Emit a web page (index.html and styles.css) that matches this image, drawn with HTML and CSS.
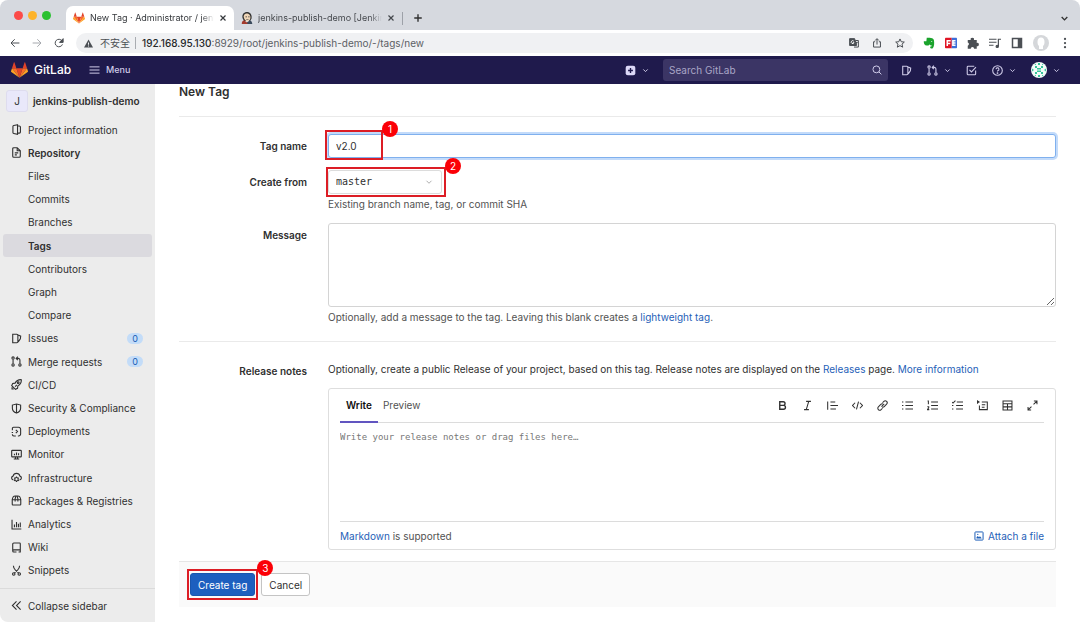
FILE: index.html
```
<!DOCTYPE html>
<html lang="en">
<head>
    <meta charset="UTF-8">
    <meta name="viewport" content="width=device-width, initial-scale=1.0">
    <title>New Tag · Administrator / jenkins-publish-demo</title>
    <link rel="stylesheet" href="styles.css">
</head>
<body>
    <!-- icon set -->
    <svg class="icon-defs" aria-hidden="true">
        <symbol id="i-tanuki" viewBox="0 0 24 22">
            <path fill="#e24329" d="M12 22 7.6 8.5h8.8z"/>
            <path fill="#fc6d26" d="M12 22 1.4 8.5h6.2zM12 22 22.6 8.5h-6.2z"/>
            <path fill="#fca326" d="M1.4 8.5 0 12.6c-.1.4 0 .8.4 1.1L12 22zM22.6 8.5l1.4 4.1c.1.4 0 .8-.4 1.1L12 22z"/>
            <path fill="#e24329" d="M1.4 8.5h6.2L4.9.4c-.1-.5-.7-.5-.9 0zM22.6 8.5h-6.2L19.1.4c.1-.5.7-.5.9 0z"/>
        </symbol>
        <symbol id="i-chevron" viewBox="0 0 16 16"><path d="m3 5.500 5 5 5-5"/></symbol>
        <symbol id="i-close" viewBox="0 0 16 16"><path d="m3 3 10 10M13 3 3 13"/></symbol>
        <symbol id="i-plus" viewBox="0 0 16 16"><path d="M8 2v12M2 8h12"/></symbol>
        <symbol id="i-back" viewBox="0 0 16 16"><path d="M15 8H2M7.500 2 1.600 8l5.900 6"/></symbol>
        <symbol id="i-forward" viewBox="0 0 16 16"><path d="M1 8h13M8.500 2l5.900 6-5.900 6"/></symbol>
        <symbol id="i-reload" viewBox="0 0 16 16"><path d="M13.500 10.200a6 6 0 1 1-.7-5.600"/><path class="solid" d="M14.600 1v6H8.800z"/></symbol>
        <symbol id="i-issues" viewBox="0 0 16 16"><path d="M2.500 1.800h6a1.500 1.500 0 0 1 1.500 1.500v9.400a1.500 1.500 0 0 1-1.500 1.500h-6zM10.500 3l3.600 1.600-.5 4-3.100 4.200"/></symbol>
        <symbol id="i-merge" viewBox="0 0 16 16"><circle cx="3" cy="3" r="1.700"/><circle cx="3" cy="13" r="1.700"/><circle cx="13" cy="13" r="1.700"/><path d="M3 5v6M13 11V6a2.500 2.500 0 0 0-2.500-2.500H8M10 1 7.500 3.500 10 6"/></symbol>
        <symbol id="i-todo" viewBox="0 0 16 16"><path d="M14 8v5a1.200 1.200 0 0 1-1.200 1.200H3A1.200 1.200 0 0 1 1.800 13V3A1.200 1.200 0 0 1 3 1.800h9M5 7l3 3 6.500-7"/></symbol>
        <symbol id="i-help" viewBox="0 0 16 16"><circle cx="8" cy="8" r="7"/><path d="M5.900 6.200a2.100 2.100 0 1 1 3 1.900c-.6.300-.9.700-.9 1.400"/><circle class="solid" cx="8" cy="11.800" r=".5"/></symbol>
        <symbol id="i-search" viewBox="0 0 16 16"><circle cx="7" cy="7" r="5.500"/><path d="m11 11 4 4"/></symbol>
        <symbol id="i-project" viewBox="0 0 16 16"><path d="M9.500 1 4 2.200A1.500 1.500 0 0 0 2.800 3.700v8.600A1.500 1.500 0 0 0 4 13.800L9.500 15zM9.500 2.800h2.700a1.500 1.500 0 0 1 1.500 1.500v7.400a1.500 1.500 0 0 1-1.500 1.500H9.500"/></symbol>
        <symbol id="i-doc" viewBox="0 0 16 16"><path d="M9 1H4a1.500 1.500 0 0 0-1.500 1.500v11A1.500 1.500 0 0 0 4 15h8a1.500 1.500 0 0 0 1.500-1.500v-8zM9 1v4.500h4.500M5.500 8.500h5M5.500 11.500h3"/></symbol>
        <symbol id="i-rocket" viewBox="0 0 16 16"><path d="M15 1c-4-.3-7 1.300-9 5L2.500 6.500 1 9.500l5.500 5.500 3-1.500L10 10c3.700-2 5.300-5 5-9zM6 11l2.500-2.500M1.500 12v2.500H4"/><circle cx="10.500" cy="5.500" r="1.300"/></symbol>
        <symbol id="i-shield" viewBox="0 0 16 16"><path d="M8 1.500 14 3v4.500c0 3.200-2.300 5.700-6 7.200-3.700-1.500-6-4-6-7.200V3zM8 1.500v13"/></symbol>
        <symbol id="i-deploy" viewBox="0 0 16 16"><path d="M2 6V3.500A1.700 1.700 0 0 1 3.700 1.800H11a3 3 0 0 1 3 3v6.700a3 3 0 0 1-3 3h-1M1 9.500h2M2 12v.5a2 2 0 0 0 2 2h3M7 5.500 9.500 8 7 10.500"/></symbol>
        <symbol id="i-monitor" viewBox="0 0 16 16"><path d="M2 2h12a1 1 0 0 1 1 1v7.500a1 1 0 0 1-1 1H2a1 1 0 0 1-1-1V3a1 1 0 0 1 1-1zM4 14.500h8M6.500 12v2M9.500 12v2M5 7v2M8 5v4M11 6v3"/></symbol>
        <symbol id="i-cloud" viewBox="0 0 16 16"><path d="M3.500 11.500A2.800 2.800 0 0 1 3 6c.7-2.500 2.500-4 5-4s4.300 1.500 5 4a2.800 2.800 0 0 1-.5 5.500"/><circle cx="8" cy="10.500" r="2.500"/><path d="M8 6.500V8M8 13v1.700M4.500 8.500l1.300.8M11.500 8.500l-1.300.8M4.500 12.700l1.300-.8M11.500 12.700l-1.300-.8"/></symbol>
        <symbol id="i-package" viewBox="0 0 16 16"><path d="M1.800 7h12.400v6.500a1 1 0 0 1-1 1H2.800a1 1 0 0 1-1-1zM1.800 7c.5-3.500 2-5.500 4.200-5.500h4c2.200 0 3.700 2 4.200 5.500M6 9.500V5.500L7 2M10 9.500V5.500L9 2"/></symbol>
        <symbol id="i-chart" viewBox="0 0 16 16"><path d="M1.500 1v13.500H15M5 8v4M8 4.500V12M10.800 7v5M13.500 5v7"/></symbol>
        <symbol id="i-book" viewBox="0 0 16 16"><path d="M13.500 11.500V2.500a1 1 0 0 0-1-1H4A1.500 1.500 0 0 0 2.500 3v10A1.500 1.500 0 0 0 4 14.500h4M2.800 12a2 2 0 0 1 1.200-.5h9.500v3H11"/></symbol>
        <symbol id="i-scissors" viewBox="0 0 16 16"><circle cx="4" cy="13" r="1.800"/><circle cx="12" cy="13" r="1.800"/><path d="M3.500 1c0 3 1 4.500 3 6.500l4.500 4M12.500 1c0 3-1 4.500-3 6.500l-4.500 4"/></symbol>
        <symbol id="i-collapse" viewBox="0 0 16 16"><path d="M8 2 2 8l6 6M14 2 8 8l6 6"/></symbol>
        <symbol id="i-bold" viewBox="0 0 16 16"><path d="M4 2.500h5a2.700 2.700 0 0 1 0 5.400H4zM4 7.900h5.500a2.800 2.800 0 0 1 0 5.600H4z"/></symbol>
        <symbol id="i-italic" viewBox="0 0 16 16"><path d="M6 2h7M3 14h7M9.800 2 6.200 14"/></symbol>
        <symbol id="i-quote" viewBox="0 0 16 16"><path d="M1 2v12M5 3h7M5 8h11M5 13h8"/></symbol>
        <symbol id="i-code" viewBox="0 0 16 16"><path d="M4.500 4 .8 8l3.700 4M11.500 4l3.700 4-3.700 4M9.500 2.500l-3 11"/></symbol>
        <symbol id="i-link" viewBox="0 0 16 16"><path d="m6.500 9.500 4-4M8 4l2-2a2.800 2.800 0 0 1 4 4l-3.500 3.500a2.800 2.800 0 0 1-3 .7M8 12l-2 2a2.800 2.800 0 0 1-4-4l3.500-3.500a2.800 2.800 0 0 1 3-.7"/></symbol>
        <symbol id="i-list" viewBox="0 0 16 16"><path d="M0 3h2M0 8h2M0 13h2M5 3h11M5 8h11M5 13h11"/></symbol>
        <symbol id="i-numlist" viewBox="0 0 16 16"><path d="M6 3h10M6 8h10M6 13h10M.8 1.500H2V6M.5 9.800h2v1.700l-2 2.500h2.800"/></symbol>
        <symbol id="i-checklist" viewBox="0 0 16 16"><path d="M7 3h9M6 8h10M6 13h10M0 3l1.500 1.500L5 1M0 8h2M0 13h2"/></symbol>
        <symbol id="i-details" viewBox="0 0 16 16"><path d="M7 3h8v11H3.500V8M7 7h5M7 10.500h4"/><path class="solid" d="M0 1v4l3-2z"/></symbol>
        <symbol id="i-table" viewBox="0 0 16 16"><path d="M1.500 1.500h13v13h-13zM1.500 5.500h13M1.500 10h13M8 5.500v9"/></symbol>
        <symbol id="i-expand" viewBox="0 0 16 16"><path d="M10 1.500h4.500V6M14.500 1.500l-5 5M6 14.500H1.500V10M1.500 14.500l5-5"/></symbol>
        <symbol id="i-image" viewBox="0 0 16 16"><path d="M2.500 1.500h11a1 1 0 0 1 1 1v11a1 1 0 0 1-1 1h-11a1 1 0 0 1-1-1v-11a1 1 0 0 1 1-1z"/><path fill="currentColor" stroke="none" d="M4 12V10l2-2 2 2 1.500-1.500L12 11v1z"/><circle fill="currentColor" stroke="none" cx="6" cy="5.500" r="1"/></symbol>
    </svg>

    <div class="window">
        <!-- browser tabs -->
        <div class="tab-strip">
            <div class="lights"><span class="light red"></span><span class="light yellow"></span><span class="light green"></span></div>
            <div class="tab tab-active">
                <svg class="favicon"><use href="#i-tanuki"/></svg>
                <span class="tab-title">New Tag · Administrator / jenk</span>
                <svg class="icon icon-close"><use href="#i-close"/></svg>
            </div>
            <div class="tab tab-idle">
                <svg class="favicon" viewBox="0 0 16 16">
                    <path fill="#333" d="M2 8C1 3 4 0 8 0s7 3 6 9l-2 3H4z"/>
                    <path fill="#f0d6b7" d="M3.500 6C4 2.500 6 1.500 8.500 2S13 5 12.500 8s-2 4.500-4 4.500S4 10 3.500 6z"/>
                    <path fill="#a33a2c" d="M1 16c0-3 1-4 3-5l4 3 2-1 1 3z"/>
                    <path fill="#3a4a5c" d="M8 14l4-3c2 1 3 3 3 5H9z"/>
                    <path fill="#333" d="M6 6h2v1H6zM9.500 6h2v1h-2zM7 9.500h3v.8H7z"/>
                </svg>
                <span class="tab-title">jenkins-publish-demo [Jenkins</span>
                <svg class="icon icon-close"><use href="#i-close"/></svg>
            </div>
            <span class="tab-divider"></span>
            <svg class="icon icon-new"><use href="#i-plus"/></svg>
            <svg class="icon icon-tabs"><use href="#i-chevron"/></svg>
        </div>

        <!-- browser address bar -->
        <div class="toolbar">
            <svg class="icon"><use href="#i-back"/></svg>
            <svg class="icon muted"><use href="#i-forward"/></svg>
            <svg class="icon"><use href="#i-reload"/></svg>
            <div class="address">
                <svg class="warn" viewBox="0 0 16 16"><path fill="#4b4f54" d="M8 1 16 15H0z"/><path stroke="#f0f1f3" stroke-width="1.800" d="M8 6v4M8 11.500v1.800"/></svg>
                <span class="insecure">不安全</span>
                <span class="url"><b>192.168.95.130</b>:8929/root/jenkins-publish-demo/-/tags/new</span>
                <div class="address-icons">
                    <svg class="icon" viewBox="0 0 16 16"><path fill="#4b4f54" d="M1 1h8l3 11H1z"/><path d="M10 4h5v10.500H8M10 7h4M12 7v2c0 1-1 2-2 3"/><path class="on-dark" d="M7.500 5A2.300 2.300 0 1 0 8 7.500H6"/></svg>
                    <svg class="icon" viewBox="0 0 16 16"><path d="M5 6H2.500v8.500h11V6H11M8 10.500V1.500M5 4l3-3 3 3"/></svg>
                    <svg class="icon" viewBox="0 0 16 16"><path d="m8 1.500 2 4.500 4.900.5-3.700 3.300 1.100 4.900L8 12.200l-4.300 2.500 1.100-4.900L1.100 6.500 6 6z"/></svg>
                </div>
            </div>
            <div class="extensions">
                <svg class="ext" viewBox="0 0 16 16"><path fill="#1ba32c" d="M5 1h4c2 0 5 1 5.500 3 .8 4 .5 9-1.500 11-1 .8-3.500.6-3.500-1.200 0-1.300 1-1.600 2.200-1.600v-1C10 11 9.500 11 9 9.500 8.500 11 7 11.500 5 11.300 2 11 1 9 1 5.500h3.500z"/><path fill="#fff" d="M10.500 6.500c.3-1 1.800-1 2 .3z"/></svg>
                <svg class="ext" viewBox="0 0 16 16"><path fill="#e01525" d="M1 1h8v14H1a1 1 0 0 1-1-1V2a1 1 0 0 1 1-1z"/><path fill="#3c6ed8" d="M9 1h6a1 1 0 0 1 1 1v12a1 1 0 0 1-1 1H9z"/><path stroke="#fff" stroke-width="2" fill="none" d="M7.500 5H3v7M3 8.500h4M14 5h-3.500v6H14M10.500 8H14"/></svg>
                <svg class="ext" viewBox="0 0 16 16"><path fill="#4b4f54" d="M1 4h4a2.200 2.200 0 1 1 4.200 0H13v4a2.200 2.200 0 1 1 0 4.200V15.500H9.500a2.200 2.200 0 0 0-4.500 0H1v-4a2.200 2.200 0 0 0 0-4.200z"/></svg>
                <svg class="ext icon" viewBox="0 0 16 16"><path d="M0 3h10M0 7h10M0 11h6M12.500 12V3H16"/><circle class="solid" cx="11" cy="12.500" r="1.500"/></svg>
                <svg class="ext" viewBox="0 0 16 16"><path fill="#4b4f54" d="M1 1h14v14H1z"/><path fill="#fff" d="M3 3h6v10H3z"/></svg>
                <svg class="profile" viewBox="0 0 16 16"><circle fill="#d5d7da" cx="8" cy="8" r="8"/><path fill="#fff" d="M4.500 7a3.500 4.500 0 0 1 7 0c0 2-.5 3-1.500 4v3H6v-3C5 10 4.500 9 4.500 7z"/></svg>
                <svg class="ext" viewBox="0 0 16 16"><g fill="#4b4f54"><circle cx="8" cy="2.500" r="1.500"/><circle cx="8" cy="8" r="1.500"/><circle cx="8" cy="13.500" r="1.500"/></g></svg>
            </div>
        </div>

        <header class="navbar">
            <a class="brand" href="#"><svg class="logo"><use href="#i-tanuki"/></svg>GitLab</a>
            <button class="menu-btn" type="button">
                <svg class="icon" viewBox="0 0 16 16"><path d="M0 3h16M0 8h16M0 13h16"/></svg>Menu
            </button>
            <button class="nav-btn nav-new" type="button" aria-label="Create new">
                <svg class="plus-box" viewBox="0 0 16 16"><rect fill="#dcd8f7" x="1" y="1" width="14" height="14" rx="3"/><path stroke="#1f1a4c" stroke-width="2" d="M8 4.500v7M4.500 8h7"/></svg>
                <svg class="icon caret"><use href="#i-chevron"/></svg>
            </button>
            <div class="search">
                <input type="text" placeholder="Search GitLab" aria-label="Search GitLab">
                <svg class="icon"><use href="#i-search"/></svg>
            </div>
            <div class="nav-icons">
                <button class="nav-btn" type="button" aria-label="Issues"><svg class="icon"><use href="#i-issues"/></svg></button>
                <button class="nav-btn" type="button" aria-label="Merge requests"><svg class="icon"><use href="#i-merge"/></svg><svg class="icon caret"><use href="#i-chevron"/></svg></button>
                <button class="nav-btn" type="button" aria-label="To-Do List"><svg class="icon"><use href="#i-todo"/></svg></button>
                <button class="nav-btn" type="button" aria-label="Help"><svg class="icon"><use href="#i-help"/></svg><svg class="icon caret"><use href="#i-chevron"/></svg></button>
                <button class="nav-btn" type="button" aria-label="Account">
                    <svg class="avatar" viewBox="0 0 16 16"><circle fill="#f3fbf8" cx="8" cy="8" r="8"/><path fill="#35c39a" d="M4 4h2v2H4zM10 4h2v2h-2zM6 6h4v1.500H6zM6 8.500h4V10H6zM4 10h2v2H4zM10 10h2v2h-2zM7 1h2v2H7zM7 13h2v2H7zM1 6.500l2 1.500-2 1.500zM15 6.500 13 8l2 1.500zM3.500 2.500l1.500-.8v1.500zM12.500 2.500 11 1.700v1.500zM3.500 13.500l1.500.8v-1.500zM12.500 13.500l-1.500.8v-1.500z"/></svg>
                    <svg class="icon caret"><use href="#i-chevron"/></svg>
                </button>
            </div>
        </header>

        <div class="page">
            <aside class="sidebar">
                <a class="project" href="#"><span class="project-avatar">J</span>jenkins-publish-demo</a>
                <nav class="side-nav">
                    <a href="#"><svg class="icon"><use href="#i-project"/></svg>Project information</a>
                    <a class="current" href="#"><svg class="icon"><use href="#i-doc"/></svg>Repository</a>
                    <a class="sub" href="#">Files</a>
                    <a class="sub" href="#">Commits</a>
                    <a class="sub" href="#">Branches</a>
                    <a class="sub current selected" href="#">Tags</a>
                    <a class="sub" href="#">Contributors</a>
                    <a class="sub" href="#">Graph</a>
                    <a class="sub" href="#">Compare</a>
                    <a href="#"><svg class="icon"><use href="#i-issues"/></svg>Issues<span class="count">0</span></a>
                    <a href="#"><svg class="icon"><use href="#i-merge"/></svg>Merge requests<span class="count">0</span></a>
                    <a href="#"><svg class="icon"><use href="#i-rocket"/></svg>CI/CD</a>
                    <a href="#"><svg class="icon"><use href="#i-shield"/></svg>Security &amp; Compliance</a>
                    <a href="#"><svg class="icon"><use href="#i-deploy"/></svg>Deployments</a>
                    <a href="#"><svg class="icon"><use href="#i-monitor"/></svg>Monitor</a>
                    <a href="#"><svg class="icon"><use href="#i-cloud"/></svg>Infrastructure</a>
                    <a href="#"><svg class="icon"><use href="#i-package"/></svg>Packages &amp; Registries</a>
                    <a href="#"><svg class="icon"><use href="#i-chart"/></svg>Analytics</a>
                    <a href="#"><svg class="icon"><use href="#i-book"/></svg>Wiki</a>
                    <a href="#"><svg class="icon"><use href="#i-scissors"/></svg>Snippets</a>
                </nav>
                <button class="collapse" type="button"><svg class="icon"><use href="#i-collapse"/></svg>Collapse sidebar</button>
            </aside>

            <main class="content">
                <h1>New Tag</h1>
                <form>
                    <div class="section">
                        <div class="row">
                            <label for="tag_name">Tag name</label>
                            <div class="field">
                                <input class="text-input focused" type="text" id="tag_name" value="v2.0">
                                <div class="mark mark-name"><span class="step">1</span></div>
                            </div>
                        </div>
                        <div class="row">
                            <label for="ref">Create from</label>
                            <div class="field">
                                <div class="select-wrap">
                                    <select id="ref"><option>master</option></select>
                                    <svg class="icon"><use href="#i-chevron"/></svg>
                                    <div class="mark mark-ref"><span class="step">2</span></div>
                                </div>
                                <p class="help">Existing branch name, tag, or commit SHA</p>
                            </div>
                        </div>
                        <div class="row">
                            <label for="message">Message</label>
                            <div class="field">
                                <textarea class="message" id="message"></textarea>
                                <p class="help">Optionally, add a message to the tag. Leaving this blank creates a <a href="#">lightweight tag</a>.</p>
                            </div>
                        </div>
                    </div>

                    <div class="section section-notes">
                        <div class="row">
                            <label for="notes">Release notes</label>
                            <div class="field">
                                <p class="notes-text">Optionally, create a public Release of your project, based on this tag. Release notes are displayed on the <a href="#">Releases</a> page. <a href="#">More information</a></p>
                                <div class="editor">
                                    <div class="editor-head">
                                        <button class="editor-tab active" type="button">Write</button>
                                        <button class="editor-tab" type="button">Preview</button>
                                        <div class="editor-tools">
                                            <button type="button" aria-label="Bold"><svg class="icon heavy"><use href="#i-bold"/></svg></button>
                                            <button type="button" aria-label="Italic"><svg class="icon"><use href="#i-italic"/></svg></button>
                                            <button type="button" aria-label="Quote"><svg class="icon"><use href="#i-quote"/></svg></button>
                                            <button type="button" aria-label="Code"><svg class="icon"><use href="#i-code"/></svg></button>
                                            <button type="button" aria-label="Link"><svg class="icon"><use href="#i-link"/></svg></button>
                                            <button type="button" aria-label="Bullet list"><svg class="icon"><use href="#i-list"/></svg></button>
                                            <button type="button" aria-label="Numbered list"><svg class="icon"><use href="#i-numlist"/></svg></button>
                                            <button type="button" aria-label="Checklist"><svg class="icon"><use href="#i-checklist"/></svg></button>
                                            <button type="button" aria-label="Collapsible section"><svg class="icon"><use href="#i-details"/></svg></button>
                                            <button type="button" aria-label="Table"><svg class="icon"><use href="#i-table"/></svg></button>
                                            <button type="button" aria-label="Full screen"><svg class="icon"><use href="#i-expand"/></svg></button>
                                        </div>
                                    </div>
                                    <textarea id="notes" placeholder="Write your release notes or drag files here…"></textarea>
                                    <div class="editor-foot">
                                        <span><a href="#">Markdown</a> is supported</span>
                                        <button class="attach" type="button"><svg class="icon"><use href="#i-image"/></svg>Attach a file</button>
                                    </div>
                                </div>
                            </div>
                        </div>
                    </div>

                    <div class="actions">
                        <div class="create-wrap">
                            <button class="btn btn-confirm" type="button">Create tag</button>
                            <div class="mark mark-create"><span class="step">3</span></div>
                        </div>
                        <button class="btn" type="button">Cancel</button>
                    </div>
                </form>
            </main>
        </div>
    </div>
</body>
</html>
```
FILE: styles.css
```
* {
    box-sizing: border-box;
}
body {
    margin: 0;
    font-family: Inter, "Noto Sans CJK SC", sans-serif;
    font-size: 10px;
    line-height: 14px;
    color: #303030;
    background: #fff;
}
button, input, select, textarea {
    font: inherit;
    color: inherit;
}
button {
    padding: 0;
    border: none;
    background: none;
}
a {
    color: #1f5fb8;
    text-decoration: none;
}
p {
    margin: 0;
}
.icon-defs {
    display: none;
}
.icon {
    width: 10px;
    height: 10px;
    flex-shrink: 0;
    overflow: visible;
    fill: none;
    stroke: currentColor;
    stroke-width: 1.6;
}
.solid {
    fill: currentColor;
}
.window {
    display: flex;
    flex-direction: column;
    min-height: 100vh;
}

/* browser */
.tab-strip {
    display: flex;
    align-items: center;
    height: 30px;
    padding: 0 11px 0 14px;
    background: #d6d9df;
    border-radius: 8px 8px 0 0;
}
.lights {
    display: flex;
    gap: 5px;
    width: 52px;
}
.light {
    width: 9px;
    height: 9px;
    border-radius: 50%;
}
.red {
    background: #fc4b48;
}
.yellow {
    background: #fdb32b;
}
.green {
    background: #2ac131;
}
.tab {
    display: flex;
    align-items: center;
    gap: 5px;
    width: 168px;
    height: 24px;
    margin-top: 6px;
    padding: 0 7px;
    font-size: 9px;
    color: #44474c;
}
.tab-active {
    background: #fff;
    border-radius: 7px 7px 0 0;
    color: #36393d;
}
.favicon {
    width: 12px;
    height: 12px;
    flex-shrink: 0;
}
.tab-title {
    flex: 1;
    overflow: hidden;
    white-space: nowrap;
    -webkit-mask-image: linear-gradient(to right, #000 90%, transparent);
    mask-image: linear-gradient(to right, #000 90%, transparent);
}
.icon-close {
    width: 8px;
    height: 8px;
    stroke-width: 2.4;
}
.tab-divider {
    width: 1px;
    height: 13px;
    margin-top: 6px;
    background: #9da1a8;
}
.icon-new {
    margin: 6px 0 0 10px;
    stroke-width: 2.2;
}
.icon-tabs {
    width: 9px;
    height: 9px;
    margin: 6px 0 0 auto;
    stroke-width: 2.4;
}
.toolbar {
    display: flex;
    align-items: center;
    gap: 12px;
    height: 26px;
    padding: 0 9px 0 10px;
    color: #4b4f54;
}
.muted {
    color: #a6a9ae;
}
.address {
    display: flex;
    flex: 1;
    align-items: center;
    height: 20px;
    padding: 0 8px;
    border-radius: 10px;
    background: #f0f1f3;
}
.warn {
    width: 9px;
    height: 9px;
}
.insecure {
    margin: 0 6px 0 7px;
    padding-right: 5px;
    border-right: 1px solid #a9acb1;
    line-height: 12px;
}
.url {
    white-space: nowrap;
    color: #5c6065;
}
.url b {
    font-weight: 500;
    color: #26282b;
}
.address-icons {
    display: flex;
    gap: 13px;
    margin-left: auto;
}
.on-dark {
    stroke: #fff;
}
.extensions {
    display: flex;
    align-items: center;
    gap: 10px;
    margin-left: -2px;
}
.ext {
    width: 12px;
    height: 12px;
}
.profile {
    width: 16px;
    height: 16px;
}

/* gitlab top bar */
.navbar {
    display: flex;
    align-items: center;
    height: 28px;
    padding: 0 20px 0 11px;
    background: #1f1a4c;
    color: #cfcbe8;
}
.brand {
    display: flex;
    align-items: center;
    gap: 6px;
    font-size: 12px;
    font-weight: 500;
    color: #fff;
}
.logo {
    width: 17px;
    height: 16px;
}
.menu-btn {
    display: flex;
    align-items: center;
    gap: 6px;
    margin-left: 18px;
    font-size: 9px;
    font-weight: 500;
}
.menu-btn .icon {
    width: 11px;
}
.nav-btn {
    display: flex;
    align-items: center;
    gap: 6px;
}
.nav-btn .caret {
    width: 7px;
    height: 7px;
    stroke-width: 2.2;
}
.nav-new {
    margin-left: auto;
}
.plus-box {
    width: 11px;
    height: 11px;
}
.search {
    display: flex;
    align-items: center;
    width: 225px;
    height: 22px;
    margin: 0 13px 0 14px;
    padding: 0 6px;
    border-radius: 3px;
    background: #3b3565;
}
.search input {
    flex: 1;
    min-width: 0;
    padding: 0;
    border: none;
    outline: none;
    background: none;
}
.search input::placeholder {
    color: #a9a5c6;
}
.nav-icons {
    display: flex;
    align-items: center;
    gap: 15px;
}
.nav-icons .icon:not(.caret) {
    width: 11px;
    height: 11px;
}
.avatar {
    width: 16px;
    height: 16px;
}

/* sidebar */
.page {
    display: flex;
    flex: 1;
}
.sidebar {
    display: flex;
    flex-direction: column;
    width: 155px;
    background: #ececec;
    border-radius: 0 0 0 8px;
}
.sidebar .icon {
    width: 11px;
    height: 11px;
}
.project {
    display: flex;
    align-items: center;
    gap: 5px;
    height: 34px;
    padding-left: 6px;
    font-weight: 600;
    color: #303030;
}
.project-avatar {
    width: 22px;
    height: 22px;
    border: 1px solid #dedcee;
    border-radius: 3px;
    background: #e9e8fa;
    line-height: 20px;
    text-align: center;
    font-weight: 400;
}
.side-nav {
    display: flex;
    flex: 1;
    flex-direction: column;
    padding: 0 3px 6px;
}
.side-nav a {
    display: flex;
    flex: 1;
    align-items: center;
    gap: 6px;
    padding: 0 9px 0 8px;
    border-radius: 3px;
    color: #303030;
}
.side-nav .sub {
    padding-left: 25px;
}
.side-nav .current {
    font-weight: 600;
}
.side-nav .selected {
    background: #dbdadf;
}
.count {
    width: 16px;
    height: 11px;
    margin-left: auto;
    border-radius: 6px;
    background: #c3dcf8;
    color: #1b5cb5;
    font-size: 9px;
    line-height: 11px;
    text-align: center;
}
.collapse {
    display: flex;
    align-items: center;
    gap: 6px;
    height: 34px;
    padding: 0 11px;
    border-top: 1px solid #dbdbdb;
}

/* form */
.content {
    flex: 1;
    min-width: 0;
    padding: 0 24px 12px;
}
h1 {
    margin: 0;
    padding-bottom: 17px;
    border-bottom: 1px solid #eaeaea;
    font-size: 12px;
    line-height: 15px;
    font-weight: 600;
}
.section {
    display: flex;
    flex-direction: column;
    gap: 12px;
    padding: 17px 0;
}
.section-notes {
    padding: 20px 0 11px;
    border-top: 1px solid #eaeaea;
}
.row {
    display: flex;
    gap: 21px;
}
.row label {
    width: 128px;
    flex-shrink: 0;
    padding-top: 5px;
    font-weight: 600;
    text-align: right;
}
.field {
    position: relative;
    flex: 1;
    min-width: 0;
}
.text-input {
    display: block;
    width: 100%;
    height: 24px;
    padding: 0 7px;
    border: 1px solid #7fb0ee;
    border-radius: 3px;
    outline: none;
}
.focused {
    box-shadow: 0 0 0 2px #c3dbfa;
}
.select-wrap {
    position: relative;
    width: 114px;
}
.select-wrap select {
    display: block;
    width: 100%;
    height: 24px;
    padding: 0 7px;
    border: 1px solid #dcdcdc;
    border-radius: 3px;
    background: #fff;
    font-family: "DejaVu Sans Mono", monospace;
    appearance: none;
}
.select-wrap .icon {
    position: absolute;
    top: 8px;
    right: 9px;
    width: 8px;
    height: 8px;
    color: #999;
}
.help {
    padding-top: 3px;
    color: #525252;
}
.message {
    display: block;
    width: 100%;
    height: 84px;
    border: 1px solid #d4d4d4;
    border-radius: 3px;
    resize: vertical;
}
.notes-text {
    margin-bottom: 12px;
}
.section-notes label {
    padding-top: 2px;
}
.editor {
    padding: 0 11px;
    border: 1px solid #dedede;
    border-radius: 3px;
}
.editor-head {
    display: flex;
    height: 34px;
    border-bottom: 1px solid #dcdcdc;
}
.editor-tab {
    height: 34px;
    padding: 0 5px;
    border-bottom: 2px solid transparent;
    color: #525252;
}
.editor-tab.active {
    padding: 0 6px;
    border-color: #6155c0;
    color: #111;
    font-weight: 600;
}
.editor-tools {
    display: flex;
    align-items: center;
    gap: 14px;
    margin-left: auto;
    padding-right: 6px;
}
.editor-tools button {
    display: flex;
}
.editor-tools .icon {
    width: 11px;
    height: 11px;
    stroke-width: 1.5;
}
.editor-tools .heavy {
    stroke-width: 2;
}
.editor textarea {
    display: block;
    width: 100%;
    height: 98px;
    padding: 7px 0;
    border: none;
    outline: none;
    resize: none;
    font-family: "DejaVu Sans Mono", monospace;
    font-size: 9px;
}
.editor textarea::placeholder {
    color: #777;
}
.editor-foot {
    display: flex;
    align-items: center;
    justify-content: space-between;
    height: 28px;
    border-top: 1px solid #dcdcdc;
    color: #525252;
}
.attach {
    display: flex;
    align-items: center;
    gap: 4px;
    color: #1f5fb8;
}
.actions {
    display: flex;
    align-items: center;
    gap: 6px;
    height: 46px;
    padding: 0 11px;
    border-top: 1px solid #e6e6e6;
    background: #fafafa;
}
.create-wrap {
    position: relative;
}
.btn {
    display: block;
    height: 23px;
    padding: 0 7px;
    border: 1px solid #c4c4c4;
    border-radius: 3px;
    background: #fff;
}
.btn-confirm {
    border-color: #1a56ad;
    background: #1d5fbf;
    color: #fff;
}

/* step marks laid over the form */
.mark {
    position: absolute;
    border: 2px solid #dc1d25;
    pointer-events: none;
}
.mark-name {
    top: -4px;
    left: -3px;
    width: 58px;
    height: 30px;
}
.mark-ref {
    inset: -3px -4px -3px -2px;
}
.mark-create {
    inset: -4px -3px;
}
.step {
    position: absolute;
    bottom: 100%;
    left: 100%;
    width: 16px;
    height: 16px;
    margin: 0 0 -5px 1px;
    border-radius: 50%;
    background: #fb0007;
    color: #fff;
    line-height: 16px;
    text-align: center;
}
```
